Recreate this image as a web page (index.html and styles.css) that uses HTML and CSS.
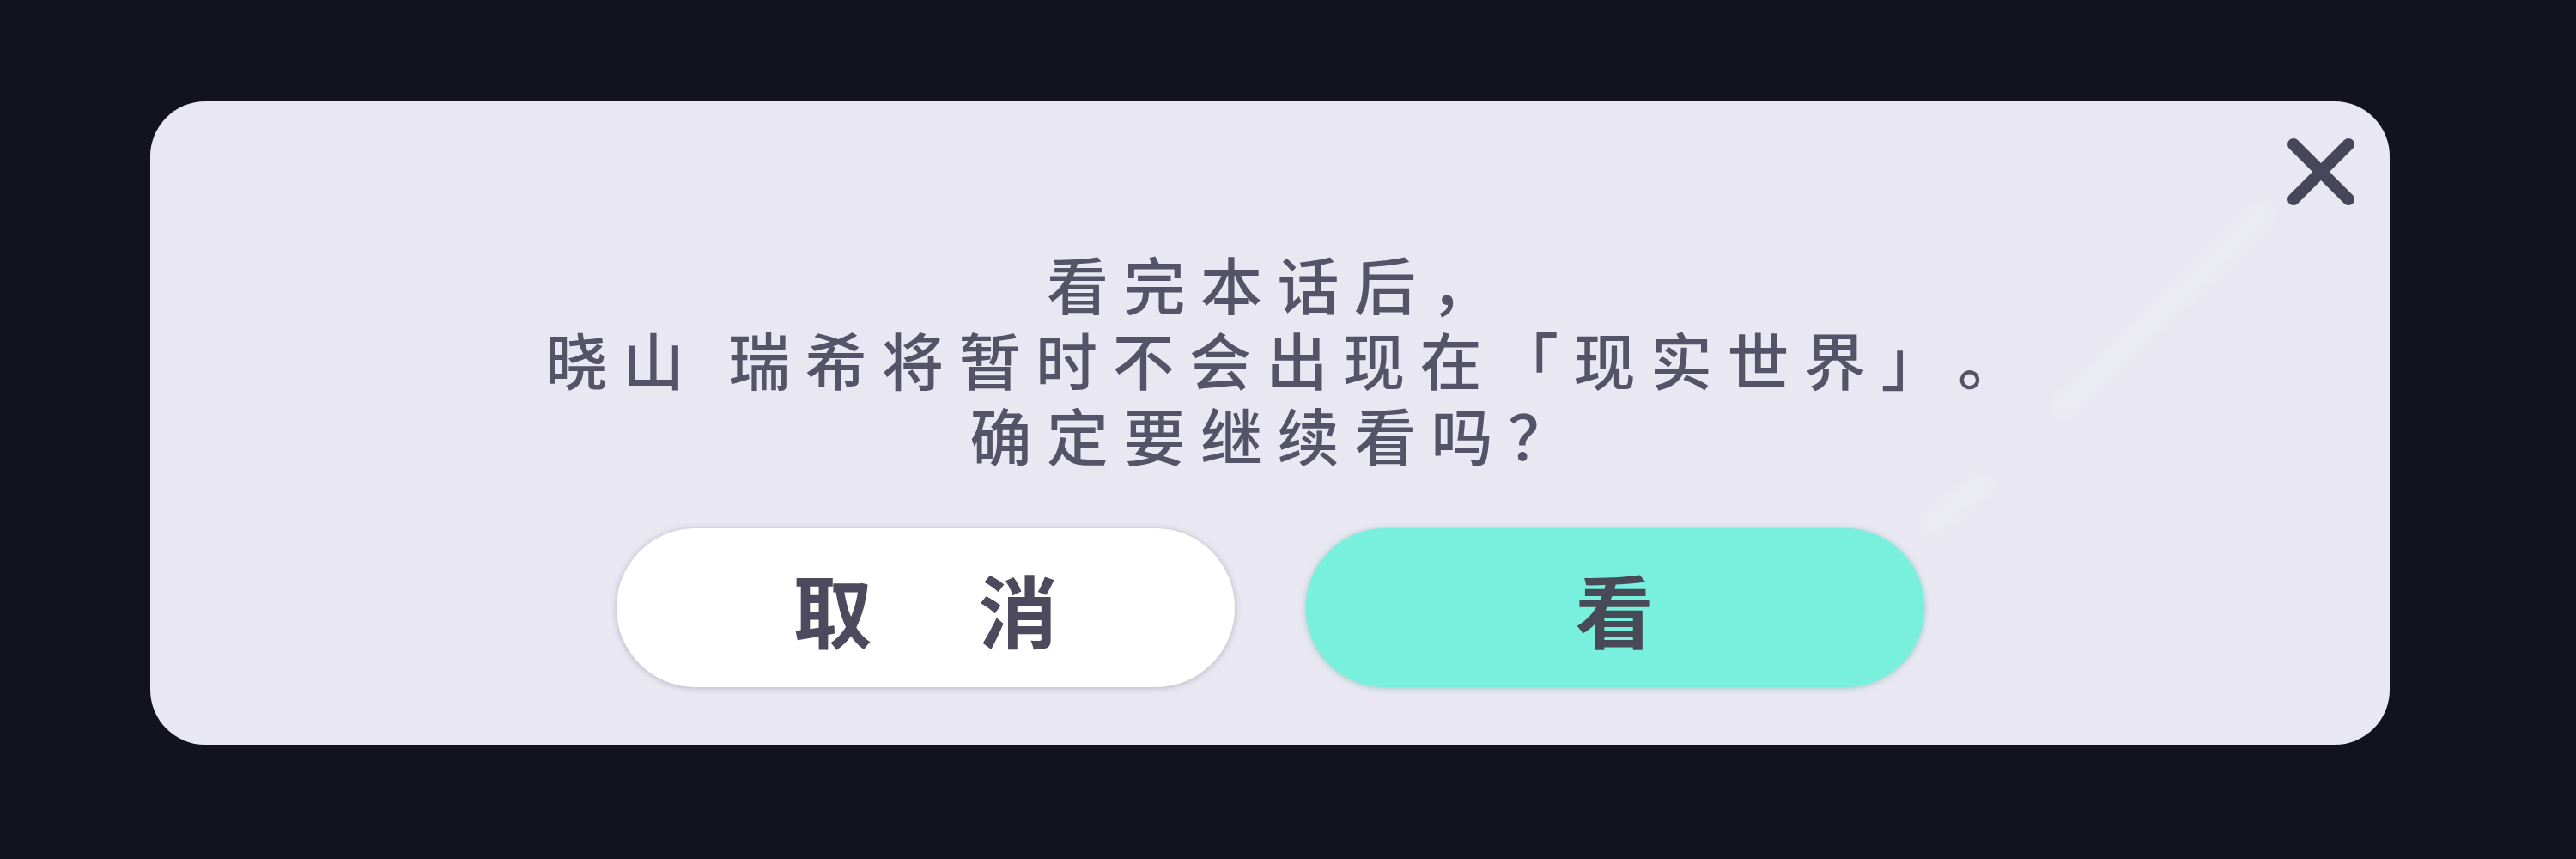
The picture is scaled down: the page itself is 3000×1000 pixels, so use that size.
FILE: index.html
```html
<!DOCTYPE html>
<html lang="zh-CN">
<head>
<meta charset="utf-8">
<title>确认</title>
<link rel="stylesheet" href="styles.css">
</head>
<body>
<div class="stage">
  <div class="dialog">
    <span class="streak streak-long"></span>
    <span class="streak streak-short"></span>
    <button class="close" aria-label="关闭">
      <svg width="80" height="80" viewBox="0 0 80 80">
        <path d="M8 8 L72 72 M72 8 L8 72" stroke="#48465a" stroke-width="14" stroke-linecap="round" fill="none"/>
      </svg>
    </button>
    <div class="message">
      <p class="line">看完本话后，</p>
      <p class="line line-wide">晓山 瑞希将暂时不会出现在「现实世界」。</p>
      <p class="line">确定要继续看吗？</p>
    </div>
    <div class="actions">
      <button class="btn btn-cancel">取　消</button>
      <button class="btn btn-ok">看</button>
    </div>
  </div>
</div>
</body>
</html>
```

FILE: styles.css
```css
html, body {
  margin: 0;
  padding: 0;
  background: #131320;
  width: 3000px;
  height: 1000px;
  overflow: hidden;
}

.stage {
  padding-top: 118px;
  padding-left: 175px;
}

.dialog {
  position: relative;
  box-sizing: border-box;
  width: 2608px;
  height: 749px;
  background: #e9e8f2;
  border-radius: 64px;
  padding-top: 167px;
  display: flex;
  flex-direction: column;
  align-items: center;
  font-family: "Noto Sans CJK SC", "Noto Sans", sans-serif;
  overflow: hidden;
}

.streak {
  position: absolute;
  height: 28px;
  border-radius: 14px;
  background: rgba(255, 255, 255, 0.11);
  filter: blur(4px);
  transform-origin: 0 50%;
}

.streak-long {
  left: 2218px;
  top: 351px;
  width: 350px;
  transform: rotate(-44deg);
}

.streak-short {
  left: 2065px;
  top: 485px;
  width: 100px;
  transform: rotate(-38deg);
}

.close {
  position: absolute;
  top: 42px;
  right: 40px;
  width: 80px;
  height: 80px;
  padding: 0;
  border: 0;
  background: transparent;
  display: block;
}

.close svg {
  display: block;
}

.message {
  display: flex;
  flex-direction: column;
  align-items: center;
  position: relative;
}

.line {
  margin: 0;
  font-size: 72px;
  line-height: 88px;
  font-weight: 500;
  letter-spacing: 17.5px;
  padding-left: 17px;
  color: #555367;
  white-space: pre;
  text-spacing-trim: space-all;
}

.line-wide {
  padding-left: 47px;
}

.actions {
  margin-top: 66px;
  display: flex;
  gap: 83px;
  position: relative;
}

.btn {
  width: 720px;
  height: 185px;
  border: 0;
  border-radius: 92px;
  font-family: "Noto Sans CJK SC", "Noto Sans", sans-serif;
  font-size: 92px;
  font-weight: 700;
  letter-spacing: 16px;
  padding: 0 0 0 16px;
  color: #4c4a5c;
  line-height: 1;
  text-spacing-trim: space-all;
}

.btn-cancel {
  background: #ffffff;
  box-shadow: 0 1px 6px 1px rgba(140, 138, 152, 0.45);
}

.btn-ok {
  background: #78f0dd;
  color: #494a58;
  box-shadow: 0 1px 6px 1px rgba(100, 180, 170, 0.5);
}
```
